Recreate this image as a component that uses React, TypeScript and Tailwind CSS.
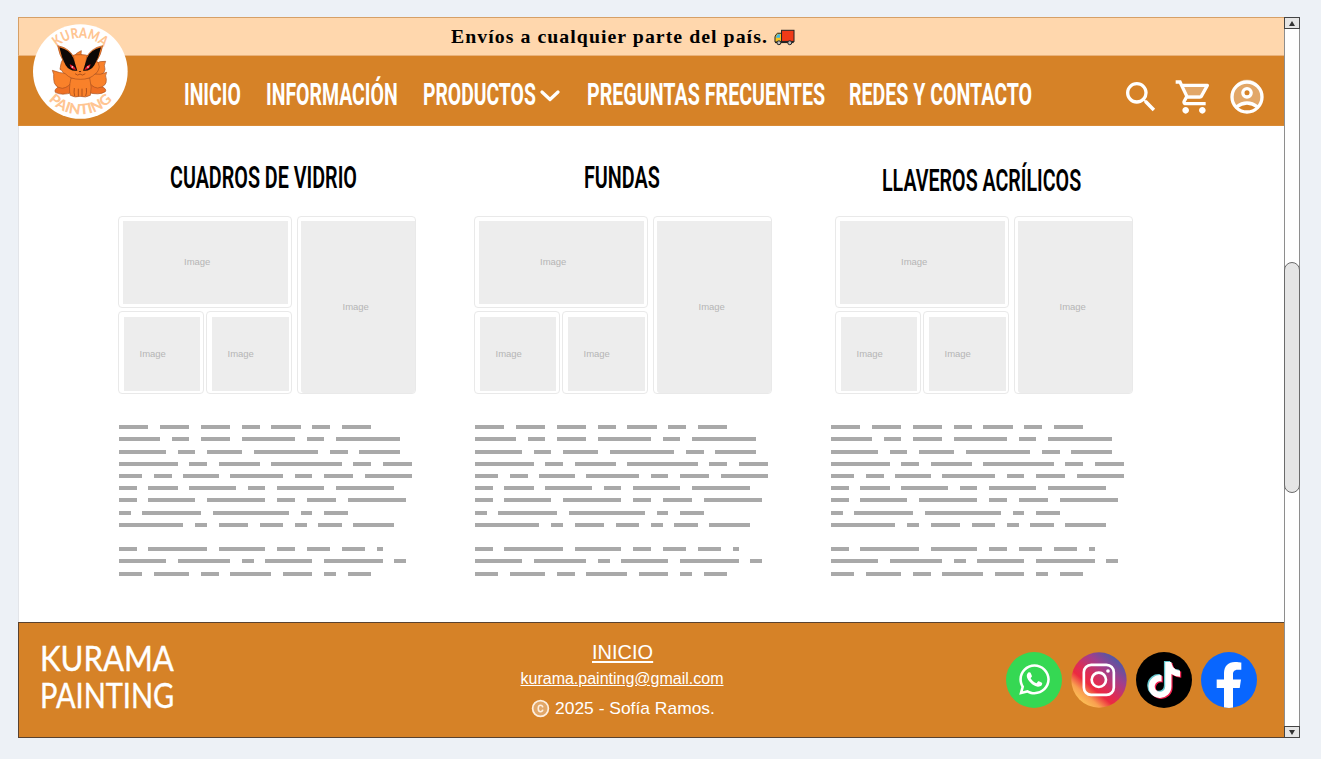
import { useLayoutEffect, useRef, useState } from "react";
import type { ReactNode } from "react";
import { MdSearch } from "react-icons/md";
import { FaWhatsapp, FaTiktok, FaFacebookF } from "react-icons/fa";

/** Single line of text condensed or widened to fill its parent's width. */
function Fit({ children }: { children: ReactNode }) {
  const ref = useRef<HTMLSpanElement>(null);
  const [scale, setScale] = useState(1);
  useLayoutEffect(() => {
    const el = ref.current;
    if (el && el.parentElement) setScale(el.parentElement.clientWidth / el.offsetWidth);
  }, []);
  return (
    <span ref={ref} className="inline-block origin-left whitespace-nowrap" style={{ transform: `scaleX(${scale})` }}>
      {children}
    </span>
  );
}

function CartIcon() {
  return (
    <svg viewBox="0 0 24 24" fill="currentColor" className="h-[40px] w-[40px]">
      <path opacity="0.300" d="M15.550 11l2.760-5H6.160l2.370 5z" />
      <path d="M15.550 13c.75 0 1.410-.41 1.750-1.030l3.580-6.490A.996.996 0 0 0 20.010 4H5.210l-.94-2H1v2h2l3.600 7.590-1.350 2.440C4.520 15.370 5.480 17 7 17h12v-2H7l1.100-2h7.450zM6.160 6h12.150l-2.760 5H8.530L6.160 6zM7 18c-1.100 0-1.990.9-1.990 2S5.900 22 7 22s2-.9 2-2-.9-2-2-2zm10 0c-1.100 0-1.990.9-1.990 2s.89 2 1.990 2 2-.9 2-2-.9-2-2-2z" />
    </svg>
  );
}

function AccountIcon() {
  return (
    <svg viewBox="0 0 24 24" fill="none" stroke="currentColor" strokeWidth="2" className="h-[40px] w-[40px]">
      <path d="M5.800 17 A9 9 0 1 1 18.200 17 Q12 13.500 5.800 17 Z" fill="currentColor" stroke="none" opacity="0.300" />
      <circle cx="12" cy="12" r="9" />
      <circle cx="12" cy="9.500" r="2.500" fill="#d68227" />
      <path d="M5.600 18 Q12 13.200 18.400 18" />
    </svg>
  );
}

function CopyrightIcon() {
  return (
    <svg viewBox="0 0 24 24" fill="none" stroke="#fdeede" strokeWidth="2" className="h-[21px] w-[21px]">
      <circle cx="12" cy="12" r="9" fill="#fff" fillOpacity="0.300" />
      <path d="M14.600 10.600 C14.300 8.700 13.200 8.300 12 8.300 C10.300 8.300 9.400 9.600 9.400 12 C9.400 14.400 10.300 15.700 12 15.700 C13.200 15.700 14.300 15.300 14.600 13.400" strokeWidth="1.800" />
    </svg>
  );
}

function FoxLogo() {
  return (
    <svg viewBox="70 42 285 285" className="absolute left-[15px] top-[7px] h-[95px] w-[95px] overflow-visible">
      <defs>
        <path id="arcTop" d="M109 187 A103 103 0 0 1 315 187" />
        <path id="arcBottom" d="M83 184 A129 129 0 0 0 341 184" />
      </defs>
      <circle cx="212" cy="184.500" r="142" fill="#fff" />
      <g fill="#ffc592" fontFamily="Lato, sans-serif" fontWeight="900" fontSize="43">
        <text textLength="154" lengthAdjust="spacingAndGlyphs">
          <textPath href="#arcTop" startOffset="50%" textAnchor="middle">KURAMA</textPath>
        </text>
        <text textLength="216" lengthAdjust="spacingAndGlyphs">
          <textPath href="#arcBottom" startOffset="50%" textAnchor="middle">PAINTING</textPath>
        </text>
      </g>
      <g stroke="#a8501f" strokeWidth="2" fill="#f9812a" strokeLinejoin="round">
        <path d="M192 142 Q198 128 215 122 Q212 130 218 142 Z" />
        <path d="M258 162 Q268 152 288 154 Q281 166 286 178 Q284 196 258 198 Z" />
        <path d="M150 228 Q132 238 137 247 Q156 258 190 247 V216 Z M272 228 Q293 236 287 245 Q268 257 234 247 V216 Z" fill="#ee6f24" />
        <path d="M172 190 Q150 190 128 181 Q134 192 132 206 Q132 232 158 235 Q180 232 190 208 Z" />
        <path d="M252 192 Q272 196 291 187 Q285 197 290 208 Q292 230 264 234 Q244 232 234 208 Z" />
        <path d="M184 204 Q176 238 182 256 Q196 264 211 259 Q228 264 242 256 Q248 232 240 204 Z" />
        <path d="M164 140 Q152 158 152 172 Q148 180 156 181 Q160 190 168 192 Q182 208 212 208 Q242 208 256 192 Q264 188 266 180 Q272 172 266 160 Q258 146 246 142 Q228 132 212 134 Q194 132 180 140 Z" />
        <path d="M144 107 Q178 114 192 140 L196 168 L164 158 Q148 134 144 107 Z" />
        <path d="M279 107 Q246 114 231 140 L227 168 L258 158 Q275 134 279 107 Z" />
      </g>
      <path d="M149 112 Q182 120 191 144 L203 182 Q180 185 168 166 Q155 142 149 112 Z M274 112 Q241 120 232 144 L220 182 Q242 185 254 166 Q268 142 274 112 Z" fill="#0d0806" />
      <path d="M180 163 Q192 166 199 179 Q184 181 180 163 Z M243 163 Q231 166 224 179 Q239 181 243 163 Z" fill="#e8192b" />
      <circle cx="188" cy="171" r="2.500" fill="#fff" />
      <circle cx="235" cy="171" r="2.500" fill="#fff" />
      <path d="M207 183 h8 l-4 4 Z" fill="#381307" />
      <path d="M196 191 Q204 199 211 192 Q218 199 227 191 M206 236 V258 M217 236 V258 M194 234 Q192 248 195 258 M230 234 Q232 248 228 258" fill="none" stroke="#8c3a14" strokeWidth="2" />
    </svg>
  );
}

function Truck() {
  return (
    <svg viewBox="640 62 64 50" className="ml-[6px] mt-[2px] h-[17px] w-[21px]">
      <path d="M643 85 Q645 77 651 74 H664 V101 H643 Z" fill="#f9c31e" stroke="#222" strokeWidth="3" />
      <path d="M647 84 L651 77 H658 V88 H646 Z" fill="#40b8e8" />
      <rect x="663" y="65" width="38" height="34" fill="#f03a17" stroke="#222" strokeWidth="3" />
      <path d="M643 102 H700" stroke="#222" strokeWidth="4" />
      <circle cx="655" cy="103" r="6" fill="#bbb" stroke="#222" strokeWidth="3" />
      <circle cx="688" cy="103" r="6" fill="#bbb" stroke="#222" strokeWidth="3" />
    </svg>
  );
}

const paragraphs = [
  [
    [5, 5, 5, 3, 5, 3, 5],
    [7, 3, 5, 9, 3, 11],
    [8, 3, 6, 11, 3, 7],
    [10, 3, 7, 12, 3, 5],
    [4, 3, 6, 9, 3, 5, 8],
    [3, 5, 8, 3, 8, 10],
    [3, 8, 10, 3, 5, 10],
    [2, 10, 13, 2, 4],
    [11, 2, 5, 4, 2, 4, 7],
  ],
  [
    [3, 10, 8, 3, 4, 4, 1],
    [8, 9, 2, 8, 10, 2],
    [4, 6, 3, 7, 5, 2, 4],
  ],
];

function Redacted() {
  return (
    <div className="mt-[27.200px] flex flex-col gap-[12.200px]">
      {paragraphs.map((rows, p) => (
        <div key={p}>
          {rows.map((row, r) => (
            <div key={r} className="flex h-[12.200px] items-center gap-[11.720px]">
              {row.map((n, i) => (
                <span key={i} className="h-[4px] shrink-0 bg-[#a9a9a9]" style={{ width: n * 5.86 }} />
              ))}
            </div>
          ))}
        </div>
      ))}
    </div>
  );
}

const label = "font-['Liberation_Sans',sans-serif] text-[9.500px] leading-[10px] text-[#b5b5b5]";
const frame = "rounded-[4px] border border-[#e9e9e9] bg-white";

function Gallery() {
  return (
    <div className="-ml-px flex h-[178px] w-[298px] gap-[5px]">
      <div className="flex w-[174px] flex-col gap-[3px]">
        <div className={`${frame} h-[92px] pl-[4px] pr-[3px] pt-[4px]`}>
          <div className={`${label} flex h-[83px] items-center bg-[#ededed] pb-[2px] pl-[61px]`}>Image</div>
        </div>
        <div className="flex gap-[2px]">
          <div className={`${frame} h-[83px] w-[86px] pl-[5px] pr-[3px] pt-[5px]`}>
            <div className={`${label} flex h-[74px] items-center bg-[#ededed] pl-[15.500px]`}>Image</div>
          </div>
          <div className={`${frame} h-[83px] w-[86px] pl-[5px] pr-[2px] pt-[5px]`}>
            <div className={`${label} flex h-[74px] items-center bg-[#ededed] pl-[15.500px]`}>Image</div>
          </div>
        </div>
      </div>
      <div className={`${frame} h-[178px] w-[119px] pl-[3px] pt-[4px]`}>
        <div className={`${label} flex h-[172px] items-center rounded-b-[3px] bg-[#ededed] pl-[41.500px]`}>Image</div>
      </div>
    </div>
  );
}

const navText = "h-[32px] shrink-0 font-['Roboto',sans-serif] text-[32px] font-bold leading-[32px] text-white";
const headText = "font-['Roboto',sans-serif] text-[32px] h-[32px] font-semibold leading-[32px] text-black";

export default function App() {
  return (
    <div className="h-[759px] w-[1321px] overflow-hidden bg-[#edf1f6] pl-[18px] pt-[17px]">
      <div className="flex h-[721px] w-[1282px]">
        <div className="relative flex w-[1267px] shrink-0 flex-col bg-white">
          <div className="flex h-[39px] items-center border border-[#d6a067] border-b-[#eab27a] bg-[#ffd7ad] pl-[432px]">
            <div className="w-[317px] font-['Liberation_Serif',serif] text-[19px] font-bold leading-[24px] tracking-[1px] text-black">
              <Fit>Envíos a cualquier parte del país.</Fit>
            </div>
            <Truck />
          </div>
          <header className="flex h-[70px] border-x border-b border-[#d98b36] bg-[#d68227] pl-[165px] pt-[22px]">
            <div className={`${navText} w-[57px]`}><Fit>INICIO</Fit></div>
            <div className={`${navText} ml-[25px] w-[132px]`}><Fit>INFORMACIÓN</Fit></div>
            <div className={`${navText} ml-[25px] w-[113px]`}><Fit>PRODUCTOS</Fit></div>
            <svg viewBox="0 0 20 14" className="ml-[4px] mt-[11px] h-[14px] w-[20px] shrink-0">
              <path d="M2 3 L10 10.500 L18 3" fill="none" stroke="#fff" strokeWidth="3.200" strokeLinecap="round" strokeLinejoin="round" />
            </svg>
            <div className={`${navText} ml-[26.500px] w-[238px]`}><Fit>PREGUNTAS FRECUENTES</Fit></div>
            <div className={`${navText} ml-[24.500px] w-[183px]`}><Fit>REDES Y CONTACTO</Fit></div>
            <div className="-mt-px ml-[88.500px] flex shrink-0 gap-[13.300px] text-[40px] text-white">
              <MdSearch />
              <CartIcon />
              <AccountIcon />
            </div>
          </header>
          <FoxLogo />
          <main className="flex h-[496px] border-l border-[#e3e5e9] pl-[100px]">
            <section className="w-[356px] pt-[35px]">
              <h2 className={`${headText} ml-[51px] w-[187px]`}><Fit>CUADROS DE VIDRIO</Fit></h2>
              <div className="pt-[23px]"><Gallery /></div>
              <Redacted />
            </section>
            <section className="w-[356px] pt-[35px]">
              <h2 className={`${headText} ml-[109px] w-[76px]`}><Fit>FUNDAS</Fit></h2>
              <div className="pt-[23px]"><Gallery /></div>
              <Redacted />
            </section>
            <section className="w-[356px] pt-[38px]">
              <h2 className={`${headText} ml-[51px] w-[199px]`}><Fit>LLAVEROS ACRÍLICOS</Fit></h2>
              <div className="pl-[5px] pt-[20px]"><Gallery /></div>
              <Redacted />
            </section>
          </main>
          <footer className="flex h-[116px] border border-[#59422f] bg-[#d68227] text-white">
            <div className="ml-[21px] mt-[16px] flex w-[134px] flex-col font-['Lato',sans-serif] text-[35px] font-normal leading-[37px] [-webkit-text-stroke:0.4px_white]">
              <div><Fit>KURAMA</Fit></div>
              <div><Fit>PAINTING</Fit></div>
            </div>
            <div className="ml-[328px] flex w-[240px] flex-col items-center pt-[17px] font-['Liberation_Sans',sans-serif]">
              <a className="block h-[24px] w-[61px] text-[21px] leading-[24px]"><Fit><span className="underline">INICIO</span></Fit></a>
              <a className="mt-[5px] block h-[20px] w-[203px] text-[16px] leading-[20px]"><Fit><span className="underline">kurama.painting@gmail.com</span></Fit></a>
              <div className="mt-[9px] flex items-center gap-[4px]">
                <CopyrightIcon />
                <div className="h-[20px] w-[160px] text-[17px] leading-[20px]"><Fit>2025 - Sofía Ramos.</Fit></div>
              </div>
            </div>
            <div className="ml-[264px] flex gap-[9px] pt-[28.500px]">
              <div className="flex h-[56px] w-[56px] items-center justify-center rounded-full bg-[#35d853] text-[35px]">
                <FaWhatsapp />
              </div>
              <svg viewBox="242 124 168 168" className="h-[56px] w-[56px]">
                <defs>
                  <linearGradient id="insta" x1="0.120" y1="0.900" x2="0.800" y2="0.100">
                    <stop offset="0" stopColor="#fdc958" />
                    <stop offset="0.180" stopColor="#f9a050" />
                    <stop offset="0.350" stopColor="#ec2a40" />
                    <stop offset="0.480" stopColor="#df2c55" />
                    <stop offset="0.750" stopColor="#9f3f8d" />
                    <stop offset="1" stopColor="#5257a4" />
                  </linearGradient>
                </defs>
                <circle cx="326" cy="208" r="83" fill="url(#insta)" />
                <rect x="280.500" y="162.500" width="90" height="90" rx="22" fill="none" stroke="#fff" strokeWidth="8" />
                <circle cx="325.500" cy="207.500" r="21.500" fill="none" stroke="#fff" strokeWidth="8" />
                <circle cx="353" cy="181" r="5.500" fill="#fff" />
              </svg>
              <svg viewBox="0 0 56 56" className="h-[56px] w-[56px]">
                <circle cx="28" cy="28" r="28" fill="#000" />
                <FaTiktok x={9} y={9} size={36} color="#66c8cf" />
                <FaTiktok x={11.5} y={11} size={36} color="#f2204f" />
                <FaTiktok x={10.3} y={10} size={36} color="#fff" />
              </svg>
              <div className="flex h-[56px] w-[56px] items-end justify-center overflow-hidden rounded-full bg-[#0866ff] text-[46px]">
                <FaFacebookF />
              </div>
            </div>
          </footer>
        </div>
        <div className="relative -ml-px flex w-[16px] shrink-0 flex-col border-x border-[#8e8e8e] bg-white">
          <div className="-mx-px flex h-[12px] items-center justify-center border border-[#444] bg-[#e5e5e5]">
            <svg viewBox="0 0 6 5" className="h-[5px] w-[6px]"><path d="M3 0 L6 5 H0 Z" fill="#333" /></svg>
          </div>
          <div className="-mx-px mt-[233px] h-[231px] rounded-full border border-[#6b6b6b] bg-[#e5e5e5]" />
          <div className="-mx-px mt-auto flex h-[12px] items-center justify-center border border-[#444] bg-[#e5e5e5]">
            <svg viewBox="0 0 6 5" className="h-[5px] w-[6px]"><path d="M0 0 H6 L3 5 Z" fill="#333" /></svg>
          </div>
        </div>
      </div>
    </div>
  );
}
